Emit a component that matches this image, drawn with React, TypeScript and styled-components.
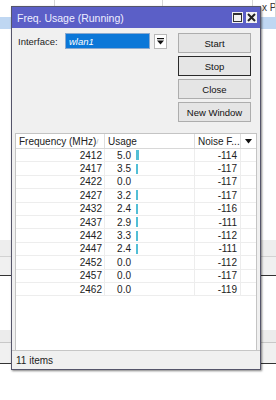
import React from "react";
import styled, { createGlobalStyle } from "styled-components";

const Global = createGlobalStyle`
  *, *::before, *::after { box-sizing: border-box; }
  html, body { margin: 0; padding: 0; background: #fff; }
  body { font-family: "Liberation Sans", Arial, sans-serif; }
`;

const Desktop = styled.div`
  position: relative;
  width: 276px;
  height: 400px;
  overflow: hidden;
  background: #fff;
  display: flex;
  flex-direction: column;
`;

const Stripe = styled.div<{ $h: number; $bg?: string; $line?: string }>`
  height: ${(p) => p.$h}px;
  flex: none;
  background: ${(p) => p.$bg ?? "transparent"};
  border-bottom: ${(p) => (p.$line ? `1px solid ${p.$line}` : "none")};
  display: flex;
`;

const StripeCell = styled.div<{ $w?: number }>`
  width: ${(p) => (p.$w ? `${p.$w}px` : "auto")};
  flex: ${(p) => (p.$w ? "none" : "1")};
  border-right: 1px solid #d6d6d6;
  font-size: 10px;
  line-height: 11px;
  color: #333;
  padding: 2px 0 0 9px;
  white-space: nowrap;
  overflow: hidden;
`;

const Spacer = styled.div<{ $h: number }>`
  height: ${(p) => p.$h}px;
  flex: none;
`;

const Dialog = styled.div`
  position: absolute;
  left: 11px;
  top: 6px;
  width: 250px;
  height: 364px;
  border: 1px solid #55556a;
  background: #f0f0f0;
  box-shadow: 1px 1px 2px rgba(0, 0, 0, 0.5);
  display: flex;
  flex-direction: column;
`;

const TitleBar = styled.div`
  height: 21px;
  flex: none;
  background: #5b5fc7;
  display: flex;
  align-items: center;
  justify-content: space-between;
  padding: 0 3px 0 5px;
`;

const Title = styled.span`
  color: #eeeeff;
  font-size: 10.5px;
`;

const TitleButtons = styled.div`
  display: flex;
  gap: 3px;
  margin-top: -1px;
`;

const TitleButton = styled.div`
  width: 11px;
  height: 11px;
  background: #f2f2f2;
  display: flex;
  align-items: center;
  justify-content: center;
`;

const Body = styled.div`
  flex: 1;
  display: flex;
  flex-direction: column;
  min-height: 0;
`;

const TopSection = styled.div`
  display: flex;
  justify-content: space-between;
  padding: 5px 9px 0 6px;
`;

const InterfaceRow = styled.div`
  display: flex;
  align-items: center;
  height: 16px;
`;

const Label = styled.span`
  width: 47px;
  font-size: 9.5px;
  color: #222;
`;

const Input = styled.div`
  width: 85px;
  height: 16px;
  background: #0b77d8;
  border: 1px solid #8aa9cf;
  color: #fff;
  font-style: italic;
  font-size: 9.5px;
  padding-left: 3px;
  display: flex;
  align-items: center;
`;

const DropButton = styled.div`
  margin-left: 4px;
  width: 13px;
  height: 15px;
  background: #fff;
  border: 1px solid #b8b8b8;
  display: flex;
  align-items: center;
  justify-content: center;
`;

const ButtonColumn = styled.div`
  display: flex;
  flex-direction: column;
  gap: 3px;
  width: 73px;
`;

const Button = styled.div<{ $focused?: boolean }>`
  height: 20px;
  border: 1px solid ${(p) => (p.$focused ? "#2a2a2a" : "#adadad")};
  background: #e5e5e5;
  color: #111;
  font-size: 9.5px;
  display: flex;
  align-items: center;
  justify-content: center;
`;

const List = styled.div`
  flex: 1;
  margin: 11px 3px 0;
  background: #fff;
  border: 1px solid #c4c4c4;
  border-bottom: none;
  display: flex;
  flex-direction: column;
  min-height: 0;
`;

const columns = "89px 90px 46px 15px";

const HeaderRow = styled.div`
  display: grid;
  grid-template-columns: ${columns};
  height: 15px;
  border-bottom: 1px solid #d8d8d8;
`;

const HeaderCell = styled.div<{ $center?: boolean }>`
  border-right: 1px solid #dedede;
  font-size: 10px;
  color: #222;
  padding-left: 3px;
  display: flex;
  align-items: center;
  justify-content: ${(p) => (p.$center ? "center" : "space-between")};
  white-space: nowrap;
  overflow: hidden;
  &:last-child {
    border-right: none;
    padding-left: 0;
  }
`;

const SortMark = styled.span`
  color: #b0b0b0;
  font-size: 8px;
  padding-right: 6px;
`;

const DataRow = styled.div`
  display: grid;
  grid-template-columns: ${columns};
  height: 13.4px;
  border-bottom: 1px solid #ededed;
`;

const Cell = styled.div<{ $align?: "left" | "right" }>`
  border-right: 1px solid #ededed;
  font-size: 10px;
  color: #222;
  display: flex;
  align-items: center;
  justify-content: ${(p) => (p.$align === "right" ? "flex-end" : "flex-start")};
  padding-right: ${(p) => (p.$align === "right" ? "2px" : "0")};
  white-space: nowrap;
  &:last-child {
    border-right: none;
  }
`;

const NoiseCell = styled(Cell)`
  padding-right: 3px;
`;

const UsageValue = styled.span`
  width: 26px;
  text-align: right;
`;

const UsageBar = styled.span`
  margin-left: 5px;
  height: 10px;
  background: #52bfd6;
`;

const StatusBar = styled.div`
  height: 19px;
  flex: none;
  border-top: 1px solid #c6c6c6;
  font-size: 10px;
  color: #222;
  padding-left: 4px;
  display: flex;
  align-items: center;
`;

const rows: [number, number, number][] = [
  [2412, 5.0, -114],
  [2417, 3.5, -117],
  [2422, 0.0, -117],
  [2427, 3.2, -117],
  [2432, 2.4, -116],
  [2437, 2.9, -111],
  [2442, 3.3, -112],
  [2447, 2.4, -111],
  [2452, 0.0, -112],
  [2457, 0.0, -117],
  [2462, 0.0, -119],
];

const MaxIcon = () => (
  <svg width="9" height="9" viewBox="0 0 9 9">
    <rect x="0.5" y="0.5" width="8" height="8" fill="none" stroke="#333" strokeWidth="1" />
    <rect x="0.5" y="0.5" width="8" height="1.5" fill="#333" />
  </svg>
);

const CloseIcon = () => (
  <svg width="9" height="9" viewBox="0 0 9 9">
    <path d="M1 1 L8 8 M8 1 L1 8" stroke="#222" strokeWidth="2" />
  </svg>
);

const DropIcon = () => (
  <svg width="7" height="7" viewBox="0 0 7 7">
    <rect x="0" y="0" width="7" height="1.2" fill="#111" />
    <path d="M0 2.5 L7 2.5 L3.5 6.5 Z" fill="#111" />
  </svg>
);

const HeaderArrow = () => (
  <svg width="7" height="5" viewBox="0 0 7 5">
    <path d="M0 0 L7 0 L3.5 4.5 Z" fill="#111" />
  </svg>
);

export default function App() {
  return (
    <>
      <Global />
      <Desktop>
        <Stripe $h={17}>
          <StripeCell $w={55} />
          <StripeCell $w={108} />
          <StripeCell $w={90} />
          <StripeCell>x Pa</StripeCell>
        </Stripe>
        <Stripe $h={12} $bg="#bfd7f2" />
        <Spacer $h={211} />
        <Stripe $h={17} $bg="#eeeeee" $line="#d2d2d2" />
        <Stripe $h={19} $bg="#f0f0f0" $line="#333" />
        <Spacer $h={54} />
        <Stripe $h={13} $bg="#ececec" $line="#c8c8c8" />
        <Stripe $h={21} $bg="#f0f0f0" $line="#333" />

        <Dialog>
          <TitleBar>
            <Title>Freq. Usage (Running)</Title>
            <TitleButtons>
              <TitleButton>
                <MaxIcon />
              </TitleButton>
              <TitleButton>
                <CloseIcon />
              </TitleButton>
            </TitleButtons>
          </TitleBar>
          <Body>
            <TopSection>
              <InterfaceRow>
                <Label>Interface:</Label>
                <Input>wlan1</Input>
                <DropButton>
                  <DropIcon />
                </DropButton>
              </InterfaceRow>
              <ButtonColumn>
                <Button>Start</Button>
                <Button $focused>Stop</Button>
                <Button>Close</Button>
                <Button>New Window</Button>
              </ButtonColumn>
            </TopSection>
            <List>
              <HeaderRow>
                <HeaderCell>
                  Frequency (MHz)
                  <SortMark>/</SortMark>
                </HeaderCell>
                <HeaderCell>Usage</HeaderCell>
                <HeaderCell>Noise F...</HeaderCell>
                <HeaderCell $center>
                  <HeaderArrow />
                </HeaderCell>
              </HeaderRow>
              {rows.map(([freq, usage, noise]) => (
                <DataRow key={freq}>
                  <Cell $align="right">{freq}</Cell>
                  <Cell>
                    <UsageValue>{usage.toFixed(1)}</UsageValue>
                    {usage > 0 && <UsageBar style={{ width: `${Math.max(1.5, usage * 0.6)}px` }} />}
                  </Cell>
                  <NoiseCell $align="right">{noise}</NoiseCell>
                  <Cell />
                </DataRow>
              ))}
            </List>
            <StatusBar>11 items</StatusBar>
          </Body>
        </Dialog>
      </Desktop>
    </>
  );
}
